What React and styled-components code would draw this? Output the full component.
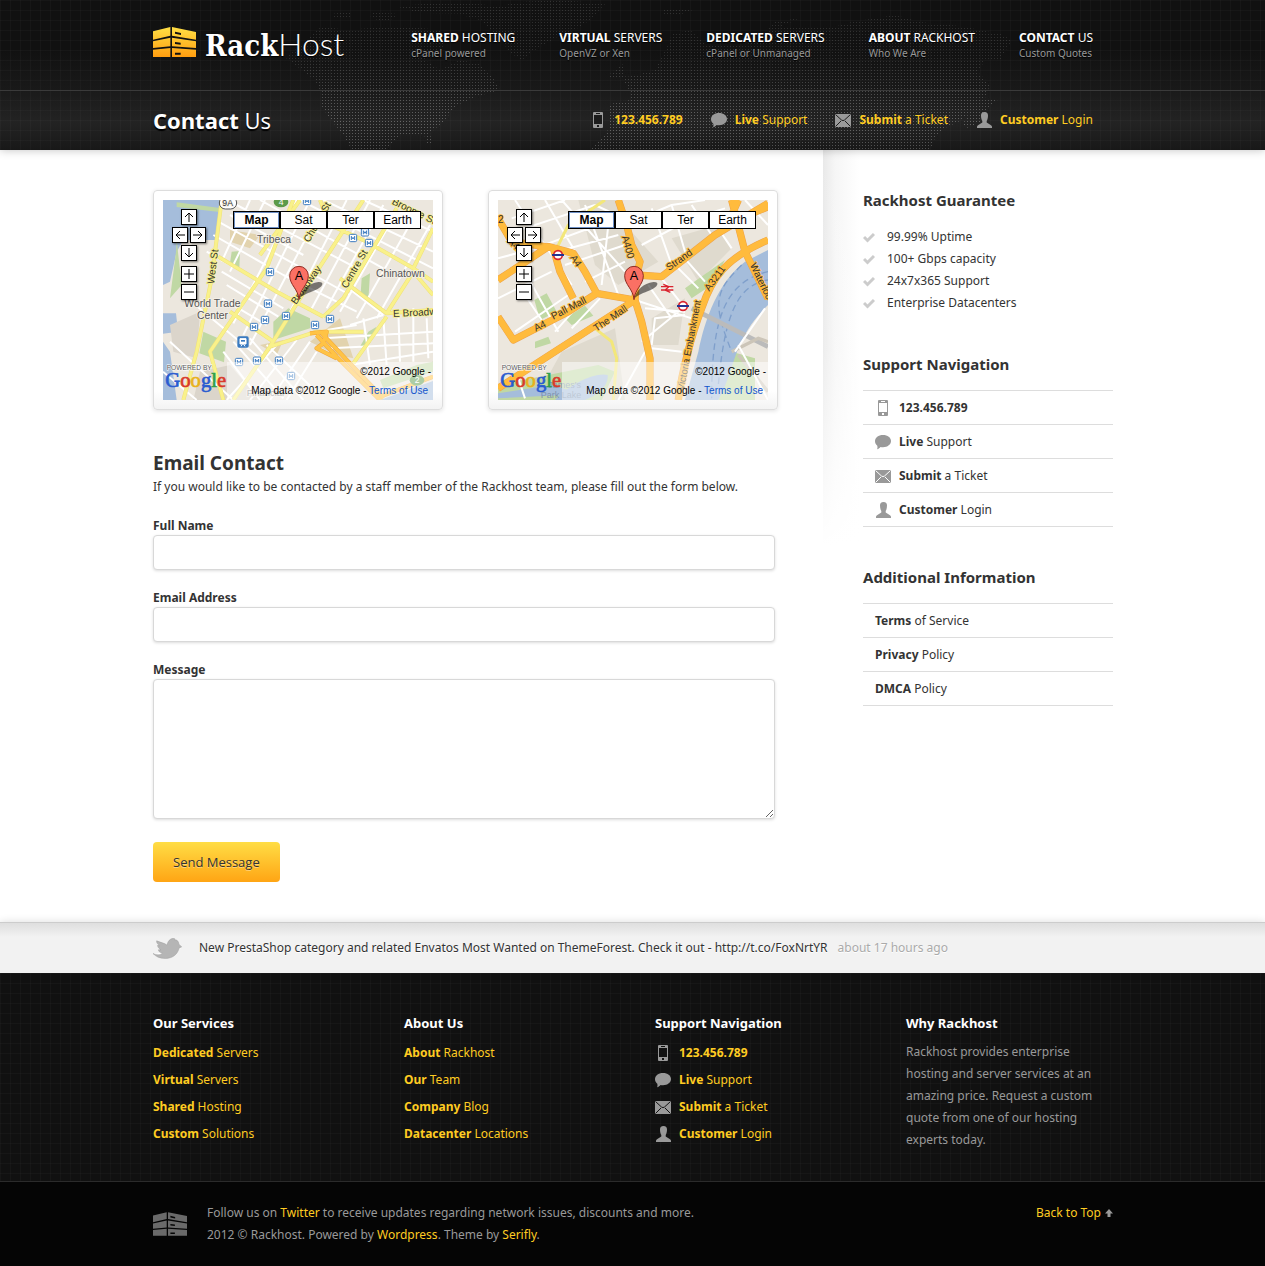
import React from 'react';
import styled, { createGlobalStyle, css } from 'styled-components';

const sans = '"Noto Sans", "Open Sans", sans-serif';
const arial = '"Liberation Sans", Arial, sans-serif';

const GlobalStyle = createGlobalStyle`
  * { box-sizing: border-box; }
  body {
    margin: 0;
    background: #fff;
    color: #333;
    font: 12px/22px ${sans};
  }
  h1, h2, h3, p, ul { margin: 0; padding: 0; }
  ul { list-style: none; }
  a { color: inherit; text-decoration: none; }
  svg { display: block; flex: none; }
`;

const Container = styled.div`
  max-width: 961px;
  margin: 0 auto;
  padding-left: 1px;
`;

const grid = css`
  background-image:
    linear-gradient(to right, rgba(255, 255, 255, 0.025) 1px, transparent 1px),
    linear-gradient(to bottom, rgba(255, 255, 255, 0.025) 1px, transparent 1px);
  background-size: 10px 10px;
`;

/* ---------- header ---------- */

const Header = styled.header`
  position: relative;
  z-index: 1;
  background: linear-gradient(#111 0, #111 50px, #191919 90px, #1a1a1a 91px, #232323 122px, #181818 150px);
  box-shadow: 0 0 9px rgba(0, 0, 0, 0.25);
`;

const Backdrop = styled.div`
  position: absolute;
  inset: 0;
  overflow: hidden;
  ${grid}
`;

const HeaderTop = styled.div`
  position: relative;
  border-bottom: 1px solid #3a3a3a;
`;

const TopRow = styled(Container)`
  display: flex;
  align-items: flex-start;
  justify-content: space-between;
  height: 90px;
  padding-right: 20px;
`;

const Logo = styled.a`
  display: flex;
  align-items: center;
  gap: 9px;
  margin-top: 27px;
  height: 30px;
  color: #fff;
  white-space: nowrap;
`;

const LogoText = styled.span`
  padding-top: 6px;
  font: 300 32px/38px Lato, sans-serif;
  text-shadow: 0 1px 1px #000;

  b { font: 700 29px/38px "DejaVu Serif Condensed", "DejaVu Serif", serif; }
`;

const MainNav = styled.nav`
  display: flex;
  gap: 44px;
  margin-top: 30px;
  white-space: nowrap;
  text-shadow: 0 1px 1px #000;
`;

const NavLink = styled.a`
  color: #fff;
  font-size: 12px;
  line-height: 16px;
  text-transform: uppercase;

  small {
    display: block;
    color: #999;
    font-size: 10px;
    line-height: 14px;
    text-transform: none;
  }
`;

const TitleRow = styled(Container)`
  position: relative;
  display: flex;
  align-items: center;
  justify-content: space-between;
  height: 59px;
  padding-right: 20px;
  padding-bottom: 2px;
`;

const PageTitle = styled.h1`
  color: #fff;
  font: 400 22px/32px "Open Sans", "Noto Sans", sans-serif;
  text-shadow: 0 2px 1px #000;
`;

const QuickLinks = styled.div`
  display: flex;
  gap: 28px;
  white-space: nowrap;
`;

const IconLink = styled.a`
  display: flex;
  align-items: center;
  gap: 8px;
`;

const YellowIconLink = styled(IconLink)`
  color: #fc2;
`;

/* ---------- content ---------- */

const Columns = styled(Container)`
  display: grid;
  grid-template-columns: minmax(0, 1fr) 290px;
`;

const Content = styled.main`
  padding: 40px 45px 40px 0;
`;

const MapCards = styled.div`
  display: grid;
  grid-template-columns: 1fr 1fr;
  gap: 45px;
`;

const MapCard = styled.div`
  padding: 9px;
  border: 1px solid #ddd;
  border-radius: 4px;
  background: linear-gradient(#fff 200px, #f3f3f3);
  box-shadow: 0 1px 4px rgba(0, 0, 0, 0.12);
`;

const MapFrame = styled.div`
  position: relative;
  height: 200px;
  overflow: hidden;
  font: 10px/14px ${arial};
  color: #000;
`;

const MapPad = styled.div`
  position: absolute;
  left: 9px;
  top: 9px;
  display: grid;
  grid-template-columns: repeat(4, 9px);
  grid-auto-rows: 18px;
`;

const PadButton = styled.button`
  grid-column: ${(p) => p.$col} / span 2;
  width: 16px;
  height: 16px;
  margin-top: ${(p) => (p.$zoom ? 3 : 0)}px;
  padding: 0;
  border: 1px solid #000;
  background: #fff;
  box-shadow: 1px 1px 2px rgba(0, 0, 0, 0.5);
`;

const MapTypes = styled.div`
  position: absolute;
  right: 12px;
  top: 11px;
  display: grid;
  grid-template-columns: repeat(4, 47px);
`;

const TypeButton = styled.button`
  height: 18px;
  padding: 0;
  border: 1px solid #000;
  outline: ${(p) => (p.$active ? '1px solid #6d8fc4' : 'none')};
  outline-offset: -2px;
  background: #fff;
  font: ${(p) => (p.$active ? 700 : 400)} 12px/14px ${arial};
  color: #000;
`;

const MapLegal = styled.div`
  position: absolute;
  right: 0;
  bottom: 0;
  width: 206px;
  padding: 3px 2px 2px 0;
  background: rgba(255, 255, 255, 0.5);
  font: 10px/14px ${arial};
  text-align: right;

  p + p { margin-top: 5px; padding-right: 3px; }
  a { color: #15c; }
`;

const ContentTitle = styled.h2`
  margin-top: 40px;
  font-size: 19px;
  line-height: 26px;
`;

const Form = styled.form`
  padding: 19px 3px 0 0;
`;

const Field = styled.label`
  display: block;
  margin-bottom: 19px;
  font-weight: 700;
  line-height: 18px;
`;

const controlStyle = css`
  display: block;
  width: 100%;
  border: 1px solid #d8d8d8;
  border-radius: 4px;
  background: #fff;
  box-shadow: 0 1px 3px rgba(0, 0, 0, 0.14);
  padding: 8px 12px;
  font: 12px/18px ${sans};
  color: #333;
`;

const TextInput = styled.input`
  ${controlStyle}
  height: 35px;
`;

const TextArea = styled.textarea`
  ${controlStyle}
  height: 140px;
  resize: vertical;
`;

const SendButton = styled.button`
  display: block;
  height: 40px;
  margin-top: 23px;
  padding: 0 20px;
  border: 0;
  border-radius: 4px;
  background: linear-gradient(#ffdd45, #ffa514);
  color: #333;
  font: 13px/20px "Open Sans", "Noto Sans", sans-serif;
  text-shadow: 0 1px 0 rgba(255, 255, 255, 0.4);
`;

/* ---------- sidebar ---------- */

const Sidebar = styled.aside`
  padding: 40px 0 40px 40px;
  background:
    linear-gradient(rgba(255, 255, 255, 0) 0, rgba(255, 255, 255, 0.2) 200px, #fff 395px),
    linear-gradient(to right, #e9e9e9, #f6f6f6 12px, #fff 36px);
`;

const SideSection = styled.section`
  & + & { margin-top: 40px; }
`;

const SideTitle = styled.h3`
  margin-bottom: 16px;
  font-size: 15px;
  line-height: 20px;
`;

const CheckItem = styled.li`
  display: flex;
  align-items: center;
  gap: 12px;
`;

const MenuList = styled.ul`
  border-top: 1px solid #ddd;
`;

const MenuItem = styled.li`
  padding: 6px 12px 5px;
  border-bottom: 1px solid #ddd;
`;

/* ---------- tweet and footer ---------- */

const TweetBar = styled.section`
  position: relative;
  border-top: 1px solid #ccc;
  background: linear-gradient(#dedede, #f2f2f2 14px);
  box-shadow: 0 0 8px rgba(0, 0, 0, 0.14);
`;

const TweetRow = styled(Container)`
  display: flex;
  align-items: center;
  height: 50px;
  text-shadow: 0 1px 0 #fff;

  svg { margin-right: 17px; }
  time { margin-left: 10px; color: #aaa; }
`;

const Footer = styled.footer`
  position: relative;
  background-color: #111;
  ${grid}
`;

const FooterColumns = styled(Container)`
  display: grid;
  grid-template-columns: repeat(4, minmax(0, 1fr));
  column-gap: 44px;
  padding-top: 40px;
  padding-bottom: 30px;
`;

const FooterTitle = styled.h3`
  color: #fff;
  font-size: 13px;
  line-height: 20px;
`;

const FooterList = styled.ul`
  margin-top: 6px;
  color: #fc2;
  line-height: 27px;
`;

const FooterText = styled.p`
  margin-top: 8px;
  color: #999;
`;

const BottomBar = styled.div`
  border-top: 1px solid #2b2b2b;
  background: #050505;
  color: #999;
`;

const BottomRow = styled(Container)`
  display: flex;
  align-items: flex-start;
  padding-top: 20px;
  padding-bottom: 20px;

  a { color: #fc2; }
`;

const FooterLogo = styled.div`
  margin: 10px 20px 0 0;
`;

const BackToTop = styled.a`
  display: flex;
  align-items: center;
  gap: 4px;
  margin-left: auto;
`;

/* ---------- icons ---------- */

const PhoneIcon = ({ color, line }) => (
  <svg width="16" height="16" viewBox="0 0 16 16">
    <rect x="3" width="10" height="16" rx="1" fill={color} />
    <path fill={line} d="M4 3h8v9H4zM6 1h4v1H6zM7 13h2v2H7z" />
  </svg>
);

const ChatIcon = ({ color }) => (
  <svg width="16" height="16" viewBox="0 0 16 16">
    <path fill={color} d="M8 1c4.6 0 8 2.6 8 6s-3.4 6.200-8 6.200c-.9 0-1.700-.1-2.500-.3-.8 1-1.900 1.900-3.300 2.300.4-1 .4-2.300.1-3.500C.9 10.600 0 9 0 7.200 0 3.600 3.400 1 8 1z" />
  </svg>
);

const MailIcon = ({ color, line }) => (
  <svg width="16" height="16" viewBox="0 0 16 16">
    <rect y="2" width="16" height="13" fill={color} />
    <path d="M.5 2.500l6 5.500q1.500 1.200 3 0l6-5.500M.5 14.500l5.500-5.500M15.500 14.500L10 9" fill="none" stroke={line} />
  </svg>
);

const UserIcon = ({ color }) => (
  <svg width="16" height="16" viewBox="0 0 16 16">
    <path fill={color} d="M8.500 0C11 0 12 1.300 12 3.600c0 2.400-.6 4.200-1.300 5.400v1.600l4.300 2.600c.6.400 1 .9 1 1.500V16H1v-1.300c0-.6.4-1.100 1-1.500l4.300-2.600V9C5.600 7.800 5 6 5 3.600 5 1.300 6 0 8.500 0z" />
  </svg>
);

const CheckIcon = () => (
  <svg width="12" height="12" viewBox="0 0 12 12">
    <path d="M1 6l3.500 3.500L11 3" fill="none" stroke="#ccc" strokeWidth="3" />
  </svg>
);

const BirdIcon = () => (
  <svg width="29" height="21" viewBox="40 113 87 62">
    <path fill="#fff" transform="translate(0 3)" d="M40 159C60 178 100 180 118 143L126 139Z" />
    <path fill="#b5b5b5" stroke="#9c9c9c" strokeWidth="1.500" d="M40 159C50 165 62 164 68 158 60 157 57 152 56 148L64 148C57 144 53 138 54 134L60 136C53 130 50 126 51 121 62 126 76 128 82 134 84 122 92 114 100 114 104 113 108 115 104 118 112 117 117 122 118 132 121 135 124 136 126 139 123 141 120 142 118 143 114 162 98 174 76 174 60 174 48 168 40 159Z" />
  </svg>
);

const UpIcon = () => (
  <svg width="8" height="8" viewBox="0 0 8 8">
    <path fill="#999" d="M4 0l4 4.500H5.500V8h-3V4.500H0z" />
  </svg>
);

const RackIcon = ({ width, height, id, from, to, hole }) => (
  <svg width={width} height={height} viewBox="39 81 129 90">
    <defs>
      <linearGradient id={id} gradientUnits="userSpaceOnUse" x1="0" y1="81" x2="0" y2="171">
        <stop offset="0" stopColor={from} />
        <stop offset="1" stopColor={to} />
      </linearGradient>
    </defs>
    <path fill={`url(#${id})`} d="M39 94L91 81V107L39 119ZM39 124L91 113V139L39 144ZM39 149L91 144V171H39ZM96 81L168 96V119L96 107ZM96 113L168 124V144L96 139ZM96 144L168 149V171H96Z" />
    <path fill={hole} d="M105 95L123 99V105L105 101ZM105 126L122 128V134L105 132ZM105 158H122V164H105Z" />
  </svg>
);

const ARROWS = {
  up: 'M7 12V3M3 7L7 3L11 7',
  left: 'M12 7H3M7 3L3 7L7 11',
  right: 'M2 7H11M7 3L11 7L7 11',
  down: 'M7 2V11M3 7L7 11L11 7',
  'zoom in': 'M2 7H12M7 2V12',
  'zoom out': 'M2 7H12',
};

const PadIcon = ({ kind }) => (
  <svg width="14" height="14" viewBox="0 0 14 14">
    <path d={ARROWS[kind]} fill="none" stroke="#000" />
  </svg>
);

/* ---------- drawings ---------- */

const World = () => (
  <svg width="960" height="150" viewBox="153 0 960 150" aria-hidden="true">
    <defs>
      <pattern id="dots" width="3" height="3" patternUnits="userSpaceOnUse">
        <rect x="1" y="1" width="1" height="1" fill="#fff" />
      </pattern>
      <linearGradient id="fade" gradientUnits="userSpaceOnUse" x1="0" y1="0" x2="0" y2="150">
        <stop offset="0" stopColor="#fff" stopOpacity=".13" />
        <stop offset=".4" stopColor="#fff" stopOpacity=".13" />
        <stop offset=".8" stopColor="#fff" stopOpacity=".3" />
        <stop offset="1" stopColor="#fff" stopOpacity=".24" />
      </linearGradient>
      <mask id="worldMask" maskUnits="userSpaceOnUse" x="153" y="0" width="960" height="150">
        <rect x="153" width="960" height="150" fill="url(#fade)" />
      </mask>
    </defs>
    <g fill="url(#dots)" mask="url(#worldMask)">
      <path d="M286 58L322 26 345 30 400 26 440 30 445 45 425 60 440 70 460 60 480 64 492 76 500 90 478 96 457 105 443 122 430 133 432 145 427 145 424 134 400 136 386 150 352 150 342 133 330 119 321 105 322 94 315 80Z" />
      <path d="M395 6L455 2 520 8 500 14 420 13Z" />
      <path d="M458 14L520 2 560 0 605 4 590 20 575 30 555 38 535 50 522 60 512 54 495 34 480 20Z" />
      <path d="M332 14L352 11 350 17 336 19ZM373 12L398 14 388 22 370 18Z" />
      <path d="M663 10L698 8 676 16 665 16Z" />
      <path d="M608 76L622 63 626 78 610 79Z" />
      <path d="M630 92L622 78 640 74 655 70 668 45 672 34 690 30 705 44 730 46 770 40 768 28 775 22 800 18 780 27 830 28 852 22 895 15 920 22 960 26 1000 34 1012 40 1000 60 985 60 978 72 990 85 985 98 975 110 962 120 945 128 935 138 930 150 590 150 600 140 608 130 610 104 630 100Z" />
      <path d="M962 64L976 62 970 74 962 80Z" />
      <path d="M985 98L1000 98 988 108 980 122 968 128 962 124Z" />
    </g>
  </svg>
);

const Roads = ({ d, color, width, edge }) => (
  <g fill="none" strokeLinejoin="round">
    {edge && <path d={d} stroke={edge} strokeWidth={width + 3} />}
    <path d={d} stroke={color} strokeWidth={width} />
  </g>
);

const MapLabel = ({ x, y, angle = 0, size = 31, color = '#333', halo = '#f4f0e8', children }) => (
  <text
    x={x}
    y={y}
    transform={`rotate(${angle} ${x} ${y})`}
    fontFamily="Liberation Sans, Arial, sans-serif"
    fontSize={size}
    fill={color}
    stroke={halo}
    strokeWidth="5"
    paintOrder="stroke"
  >
    {children}
  </text>
);

const Marker = () => (
  <g>
    <path d="M447 342C455 315 475 295 505 291 525 290 520 305 495 316 475 325 460 328 447 342Z" fill="#000" opacity=".5" />
    <path d="M447 344C445 312 419 300 419 272A28 28 0 0 1 475 272C475 300 449 312 447 344Z" fill="#fb7064" stroke="#8d2c23" strokeWidth="3" />
    <text x="447" y="286" textAnchor="middle" fontFamily="Liberation Sans, Arial, sans-serif" fontSize="38" fill="#000">A</text>
  </g>
);

const GoogleMark = () => (
  <g>
    <text x="50" y="554" fontFamily="Liberation Sans, Arial, sans-serif" fontSize="20" fill="#555" stroke="#fff" strokeWidth="3" paintOrder="stroke">POWERED BY</text>
    <text x="46" y="606" fontFamily="Liberation Serif, Times New Roman, serif" fontSize="62" strokeWidth="2">
      <tspan fill="#2a5bd0" stroke="#2a5bd0">G</tspan>
      <tspan fill="#d93a2b" stroke="#d93a2b">o</tspan>
      <tspan fill="#e9b21c" stroke="#e9b21c">o</tspan>
      <tspan fill="#2a5bd0" stroke="#2a5bd0">g</tspan>
      <tspan fill="#2fa04a" stroke="#2fa04a">l</tspan>
      <tspan fill="#d93a2b" stroke="#d93a2b">e</tspan>
    </text>
  </g>
);

const METRO = [[471, 48], [645, 142], [609, 159], [657, 174], [360, 261], [354, 356], [408, 393], [345, 405], [312, 426], [495, 420], [540, 402], [267, 531], [321, 527], [387, 527], [423, 573]];

const NewYork = () => (
  <svg width="100%" height="200" viewBox="39 45 810 600" preserveAspectRatio="xMidYMid slice">
    <rect x="39" y="45" width="810" height="600" fill="#ece7de" />
    <path fill="#a5bddb" d="M39 45H212L195 165 100 165 80 200 60 290 39 300ZM39 385H78L84 440 39 446ZM39 470L60 500 80 645H39ZM690 645L849 588V645Z" />
    <path fill="#dbd5cb" d="M60 420L150 380 140 520 70 500ZM150 560L240 540 330 645H130Z" />
    <path fill="#c0d8a4" d="M80 52L215 70V82L80 66ZM80 165L95 300 60 340 78 200ZM245 200L270 198 268 250 240 235ZM370 410L415 370 480 400 480 430 370 465ZM160 440L228 470 222 532 148 505ZM635 280L660 265 655 345 632 325ZM630 485L655 440 680 425 660 475ZM690 585L800 540 849 530 849 560 700 610Z" />
    <path fill="#e2d3ae" d="M240 135L330 150 300 190 240 170ZM480 470L570 400 610 520 560 510ZM330 480L400 465 380 510Z" />
    <Roads color="#fff" width={6} d="M205 110L420 230 600 330M190 150L400 270 560 350M240 90L460 210M170 200L480 375M215 260L400 370M230 300L385 395M215 340L350 420M260 60L640 260M330 45L700 250M450 45L849 250M520 45L849 200M640 45L849 140M300 45L215 230M345 45L240 260M440 45L250 415M480 45L280 450M520 60L300 480M590 45L400 420M660 45L480 380M700 60L530 370M740 80L570 380M790 100L620 400M840 120L680 400M570 290L700 390M560 350L620 380M100 330L330 520M60 470L250 645M39 560L140 645M220 500L330 645M250 470L400 640M300 460L460 645M350 480L500 620M380 480L230 645M440 465L300 645M480 470L360 645M500 500L410 645M520 460L849 440M540 490L849 475M600 540L849 500M640 400L660 540M700 400L710 540M745 380L750 530M790 370L790 530M830 400L835 520M600 420L700 390M500 440L620 420" />
    <Roads color="#f9f18a" edge="#efe07a" width={9} d="M215 45L185 280 140 500 100 645M430 45L395 130 350 250 180 500 220 645M640 45L500 260 360 485 250 645M740 70L580 340 520 395M205 215L380 320 520 395M240 380L370 470M360 485L500 440 640 440M570 280L710 385 849 375M710 385L790 260 849 330M610 535L710 395M510 45L540 120 650 170 790 250 849 290M790 250L849 130M330 210L450 45" />
    <Roads color="#ffc345" edge="#f0a53a" width={10} d="M480 445L530 440 520 475 500 490 560 520M500 450L560 515 690 645M515 445L590 525 700 640M690 635L849 575" />
    {METRO.map(([x, y]) => (
      <g key={`${x}-${y}`}>
        <rect x={x - 11} y={y - 11} width="22" height="22" rx="4" fill="#fff" stroke="#3b7bc0" strokeWidth="3" />
        <path d={`M${x - 5} ${y + 6}V${y - 5}L${x} ${y + 3} ${x + 5} ${y - 5}V${y + 6}`} fill="none" stroke="#3b7bc0" strokeWidth="3" />
      </g>
    ))}
    <rect x="262" y="454" width="34" height="34" rx="5" fill="#3b7bc0" />
    <path d="M270 461h18v16h-18zM273 484l4-6M285 484l-4-6" fill="#fff" stroke="#fff" strokeWidth="3" />
    <path d="M273 465h12v5h-12z" fill="#3b7bc0" />
    <rect x="208" y="36" width="52" height="36" rx="18" fill="#fff" stroke="#555" strokeWidth="3" />
    <MapLabel x={217} y={64} size={26}>9A</MapLabel>
    <ellipse cx="393" cy="51" rx="22" ry="16" fill="#5b9a49" />
    <MapLabel x={386} y={60} size={26} color="#fff" halo="none">4</MapLabel>
    <ellipse cx="801" cy="586" rx="22" ry="16" fill="#5b9a49" />
    <MapLabel x={794} y={595} size={26} color="#fff" halo="none">2</MapLabel>
    <MapLabel x={321} y={175} color="#555">Tribeca</MapLabel>
    <MapLabel x={678} y={275} color="#555">Chinatown</MapLabel>
    <MapLabel x={103} y={367} color="#555">World Trade</MapLabel>
    <MapLabel x={141} y={403} color="#555">Center</MapLabel>
    <MapLabel x={290} y={634} size={28} color="#777">Financial</MapLabel>
    <MapLabel x={192} y={298} angle={-83} size={30} halo="#f9f18a">West St</MapLabel>
    <MapLabel x={477} y={174} angle={-60} size={30} halo="#f9f18a">Church St</MapLabel>
    <MapLabel x={438} y={360} angle={-55} size={30} halo="#f9f18a">Broadway</MapLabel>
    <MapLabel x={590} y={312} angle={-60} size={30} halo="#f9f18a">Centre St</MapLabel>
    <MapLabel x={730} y={396} angle={-3} size={30} halo="#f9f18a">E Broadway</MapLabel>
    <MapLabel x={724} y={56} angle={26} size={30} halo="#f9f18a">Broome St</MapLabel>
    <Marker />
    <GoogleMark />
  </svg>
);

const Tube = ({ x, y }) => (
  <g>
    <circle cx={x} cy={y} r="13" fill="#fff" stroke="#d9232e" strokeWidth="5" />
    <rect x={x - 18} y={y - 3} width="36" height="6" fill="#24338f" />
  </g>
);

const London = () => (
  <svg width="100%" height="200" viewBox="39 45 810 600" preserveAspectRatio="xMidYMid slice">
    <rect x="39" y="45" width="810" height="600" fill="#ece7de" />
    <path fill="#dfdace" d="M280 45H400L430 130 520 230 400 300 330 240ZM560 160L700 120 740 190 640 290ZM500 400L600 340 580 480 500 480ZM230 500L390 430 420 645H150Z" />
    <path fill="#c0d8a4" d="M148 345L185 325 215 380 165 405ZM240 400L300 362 325 392 260 420ZM600 310L720 225 680 300 620 340ZM740 500L810 520V645H700ZM39 600L340 540 390 560 350 645H39ZM150 470L190 455 198 475 150 490Z" />
    <path fill="#a5bddb" d="M849 195L780 230C700 290 660 400 640 500L600 645H700C730 590 740 540 760 490 790 420 820 390 849 360ZM210 645C250 600 330 560 368 570 372 600 340 630 300 645ZM39 625L200 600 250 615 240 630 39 640Z" />
    <path d="M849 260C720 290 680 400 680 640M849 285C760 300 720 380 700 600M770 240C690 320 680 350 740 500" fill="none" stroke="#7f9fcb" strokeWidth="4" strokeDasharray="20 12" />
    <path d="M620 370L849 485" stroke="#bbb" strokeWidth="14" />
    <path d="M740 500L820 460 849 470M760 510L849 620" stroke="#ccc5b8" strokeWidth="10" fill="none" />
    <Roads color="#fff" width={6} d="M90 45L260 300M180 45L300 250M230 45L420 260M330 60L480 130M80 100L240 45M60 150L330 60M150 190L420 90M215 200L400 150M240 240L420 180M39 220L150 190M39 340L200 260M90 440L250 330M100 300L180 420M130 280L220 440M210 440L290 350M260 430L345 340M300 290L420 230M370 120L350 300M300 60L400 330M440 110L560 60 660 45M470 180L620 100 720 70M560 60L600 200M500 70L560 240M620 60L680 150M700 130L740 190M560 230L640 310M590 210L660 290M530 280L600 370M490 300L560 400M480 370L600 380M450 345L620 400M500 490L590 500M500 480L510 400 600 390M470 470L580 380M120 640L100 580M400 645L480 500M780 45L849 120M760 480L849 645M840 370L750 500" />
    <Roads color="#f3e77a" width={9} d="M360 45L250 120 215 190M330 430L380 470 395 520 385 645" />
    <Roads color="#ffbb3d" edge="#eda24a" width={19} d="M39 395L85 465 250 380 335 325 450 345M335 325L300 260 265 205 190 185 39 285M205 190L225 260 265 340M39 100L80 170 215 190M400 45L425 120 440 180 465 230 455 270 530 275 690 150 849 55M455 270L450 345 39 610M450 345L470 410 495 520 495 645M580 645C590 560 620 450 650 370 680 280 720 220 849 165M740 45L780 200 849 340M760 45L740 90M849 65L720 120" />
    <MapLabel x={66} y={170} angle={45} size={30} halo="#ffbb3d">A42</MapLabel>
    <MapLabel x={39} y={115} size={30} halo="#ffbb3d">2</MapLabel>
    <MapLabel x={254} y={218} angle={55} size={30} halo="#ffbb3d">A4</MapLabel>
    <MapLabel x={410} y={155} angle={74} size={30} halo="#ffbb3d">A400</MapLabel>
    <MapLabel x={552} y={258} angle={-35} size={30} halo="#ffbb3d">Strand</MapLabel>
    <MapLabel x={673} y={320} angle={-54} size={30} halo="#ffbb3d">A3211</MapLabel>
    <MapLabel x={152} y={440} angle={-25} size={30} halo="#ffbb3d">A4</MapLabel>
    <MapLabel x={205} y={404} angle={-27} size={30} halo="#ffbb3d">Pall Mall</MapLabel>
    <MapLabel x={334} y={440} angle={-34} size={30} halo="#ffbb3d">The Mall</MapLabel>
    <MapLabel x={794} y={240} angle={64} size={30} halo="#ffbb3d">Waterloo</MapLabel>
    <MapLabel x={596} y={617} angle={-79} size={29} halo="#ffbb3d">Victoria Embankment</MapLabel>
    <MapLabel x={190} y={610} size={27} color="#7d92ad" halo="none">James's</MapLabel>
    <MapLabel x={167} y={640} size={27} color="#7d92ad" halo="none">Park Lake</MapLabel>
    <Tube x={219} y={210} />
    <Tube x={594} y={363} />
    <path d="M528 305H565M528 315H565M535 298L552 305 540 315 556 322" fill="none" stroke="#d9232e" strokeWidth="4" />
    <Marker />
    <GoogleMark />
  </svg>
);

/* ---------- composed parts ---------- */

const SUPPORT = [
  { Icon: PhoneIcon, strong: '123.456.789', rest: '' },
  { Icon: ChatIcon, strong: 'Live', rest: ' Support' },
  { Icon: MailIcon, strong: 'Submit', rest: ' a Ticket' },
  { Icon: UserIcon, strong: 'Customer', rest: ' Login' },
];

const NAV = [
  ['Shared', 'Hosting', 'cPanel powered'],
  ['Virtual', 'Servers', 'OpenVZ or Xen'],
  ['Dedicated', 'Servers', 'cPanel or Unmanaged'],
  ['About', 'Rackhost', 'Who We Are'],
  ['Contact', 'Us', 'Custom Quotes'],
];

const SERVICES = [['Dedicated', 'Servers'], ['Virtual', 'Servers'], ['Shared', 'Hosting'], ['Custom', 'Solutions']];
const ABOUT = [['About', 'Rackhost'], ['Our', 'Team'], ['Company', 'Blog'], ['Datacenter', 'Locations']];
const POLICIES = [['Terms', 'of Service'], ['Privacy', 'Policy'], ['DMCA', 'Policy']];
const GUARANTEES = ['99.99% Uptime', '100+ Gbps capacity', '24x7x365 Support', 'Enterprise Datacenters'];

const PAD = [['up', 2], ['left', 1], ['right', 3], ['down', 2], ['zoom in', 2], ['zoom out', 2]];

const MapWidget = ({ children }) => (
  <MapCard>
    <MapFrame>
      {children}
      <MapPad>
        {PAD.map(([kind, col]) => (
          <PadButton key={kind} type="button" aria-label={kind} $col={col} $zoom={kind.startsWith('zoom')}>
            <PadIcon kind={kind} />
          </PadButton>
        ))}
      </MapPad>
      <MapTypes>
        {['Map', 'Sat', 'Ter', 'Earth'].map((name, i) => (
          <TypeButton key={name} type="button" $active={i === 0}>{name}</TypeButton>
        ))}
      </MapTypes>
      <MapLegal>
        <p>©2012 Google -</p>
        <p>Map data ©2012 Google - <a href="#terms">Terms of Use</a></p>
      </MapLegal>
    </MapFrame>
  </MapCard>
);

const LinkColumn = ({ title, links }) => (
  <section>
    <FooterTitle>{title}</FooterTitle>
    <FooterList>
      {links.map(([strong, rest]) => (
        <li key={strong}><a href="#page"><b>{strong}</b> {rest}</a></li>
      ))}
    </FooterList>
  </section>
);

export default function App() {
  return (
    <>
      <GlobalStyle />
      <Header id="top">
        <Backdrop><Container><World /></Container></Backdrop>
        <HeaderTop>
          <TopRow>
            <Logo href="#home">
              <RackIcon width={43} height={30} id="rackGold" from="#ffdf45" to="#ff9d10" hole="#111" />
              <LogoText><b>Rack</b>Host</LogoText>
            </Logo>
            <MainNav>
              {NAV.map(([strong, rest, note]) => (
                <NavLink key={strong} href="#page"><b>{strong}</b> {rest}<small>{note}</small></NavLink>
              ))}
            </MainNav>
          </TopRow>
        </HeaderTop>
        <TitleRow>
          <PageTitle><b>Contact</b> Us</PageTitle>
          <QuickLinks>
            {SUPPORT.map(({ Icon, strong, rest }) => (
              <YellowIconLink key={strong} href="#support">
                <Icon color="#999" line="#1c1c1c" />
                <span><b>{strong}</b>{rest}</span>
              </YellowIconLink>
            ))}
          </QuickLinks>
        </TitleRow>
      </Header>

      <Columns>
        <Content>
          <MapCards>
            <MapWidget><NewYork /></MapWidget>
            <MapWidget><London /></MapWidget>
          </MapCards>
          <ContentTitle>Email Contact</ContentTitle>
          <p>If you would like to be contacted by a staff member of the Rackhost team, please fill out the form below.</p>
          <Form>
            <Field>Full Name<TextInput type="text" /></Field>
            <Field>Email Address<TextInput type="email" /></Field>
            <Field>Message<TextArea /></Field>
            <SendButton type="button">Send Message</SendButton>
          </Form>
        </Content>
        <Sidebar>
          <SideSection>
            <SideTitle>Rackhost Guarantee</SideTitle>
            <ul>
              {GUARANTEES.map((text) => <CheckItem key={text}><CheckIcon />{text}</CheckItem>)}
            </ul>
          </SideSection>
          <SideSection>
            <SideTitle>Support Navigation</SideTitle>
            <MenuList>
              {SUPPORT.map(({ Icon, strong, rest }) => (
                <MenuItem key={strong}>
                  <IconLink href="#support">
                    <Icon color="#999" line="#fff" />
                    <span><b>{strong}</b>{rest}</span>
                  </IconLink>
                </MenuItem>
              ))}
            </MenuList>
          </SideSection>
          <SideSection>
            <SideTitle>Additional Information</SideTitle>
            <MenuList>
              {POLICIES.map(([strong, rest]) => (
                <MenuItem key={strong}><a href="#policy"><b>{strong}</b> {rest}</a></MenuItem>
              ))}
            </MenuList>
          </SideSection>
        </Sidebar>
      </Columns>

      <TweetBar>
        <TweetRow>
          <BirdIcon />
          <span>New PrestaShop category and related Envatos Most Wanted on ThemeForest. Check it out - http://t.co/FoxNrtYR</span>
          <time>about 17 hours ago</time>
        </TweetRow>
      </TweetBar>

      <Footer>
        <FooterColumns>
          <LinkColumn title="Our Services" links={SERVICES} />
          <LinkColumn title="About Us" links={ABOUT} />
          <section>
            <FooterTitle>Support Navigation</FooterTitle>
            <FooterList>
              {SUPPORT.map(({ Icon, strong, rest }) => (
                <li key={strong}>
                  <IconLink href="#support">
                    <Icon color="#999" line="#111" />
                    <span><b>{strong}</b>{rest}</span>
                  </IconLink>
                </li>
              ))}
            </FooterList>
          </section>
          <section>
            <FooterTitle>Why Rackhost</FooterTitle>
            <FooterText>Rackhost provides enterprise hosting and server services at an amazing price. Request a custom quote from one of our hosting experts today.</FooterText>
          </section>
        </FooterColumns>
        <BottomBar>
          <BottomRow>
            <FooterLogo><RackIcon width={34} height={24} id="rackGray" from="#6a6a6a" to="#6a6a6a" hole="#050505" /></FooterLogo>
            <div>
              <p>Follow us on <a href="#twitter">Twitter</a> to receive updates regarding network issues, discounts and more.</p>
              <p>2012 © Rackhost. Powered by <a href="#wordpress">Wordpress</a>. Theme by <a href="#serifly">Serifly</a>.</p>
            </div>
            <BackToTop href="#top">Back to Top <UpIcon /></BackToTop>
          </BottomRow>
        </BottomBar>
      </Footer>
    </>
  );
}
